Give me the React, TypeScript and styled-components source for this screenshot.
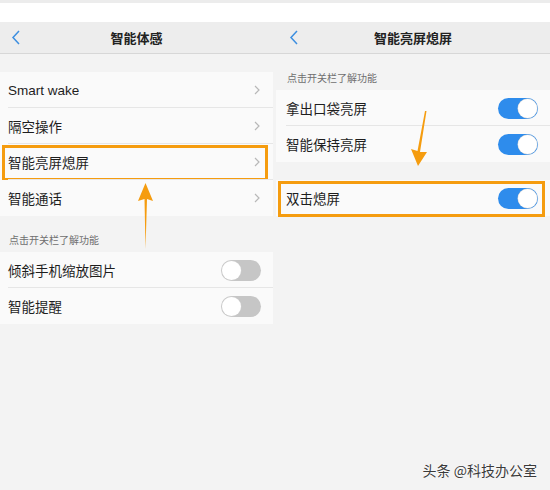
import React from "react";
import styled, { createGlobalStyle } from "styled-components";

const Global = createGlobalStyle`
  html, body { margin: 0; padding: 0; background: #f3f3f3; }
  body { font-family: "Liberation Sans", "Noto Sans CJK SC", sans-serif; }
`;

const Page = styled.div`
  position: relative;
  width: 550px;
  height: 490px;
  overflow: hidden;
  display: flex;
  background: #f3f3f3;
`;

const Phone = styled.div<{ $w: number; $pad: number; $trim: number }>`
  width: ${(p) => p.$w}px;
  flex: none;
  display: flex;
  flex-direction: column;
  background: #f3f3f3;
  --pad: ${(p) => p.$pad}px;
  --trim: ${(p) => p.$trim}px;
`;

const StatusBar = styled.div`
  height: 19px;
  border-top: 3px solid #ececec;
  background: #ffffff;
`;

const Header = styled.div`
  position: relative;
  height: 31px;
  background: #ededed;
  border-bottom: 1px solid #d7d7d7;
  display: flex;
  align-items: center;
  justify-content: center;
  padding-right: var(--trim);
  font-family: "Noto Sans CJK SC", sans-serif;
  font-size: 13px;
  font-weight: 600;
  color: #222;
`;

const Back = styled.svg`
  position: absolute;
  left: calc(var(--pad) + 3px);
  top: 8px;
`;

const Spacer = styled.div<{ $h: number }>`
  height: ${(p) => p.$h}px;
`;

const SectionLabel = styled.div`
  height: 36px;
  box-sizing: border-box;
  display: flex;
  align-items: flex-end;
  padding: 0 0 5px calc(var(--pad) + 1px);
  font-family: "Noto Sans CJK SC", sans-serif;
  font-size: 10px;
  color: #6f6f6f;
`;

const Group = styled.div`
  background: #fafafa;
  margin-right: var(--trim);
`;

const Row = styled.div<{ $hl?: boolean; $last?: boolean }>`
  position: relative;
  height: 36px;
  box-sizing: border-box;
  display: flex;
  align-items: center;
  justify-content: space-between;
  padding: 0 12px 0 var(--pad);
  background: #fafafa;
  font-family: "Liberation Sans", "Noto Sans CJK SC", sans-serif;
  font-size: 13.5px;
  color: #1e1e1e;
  &::after {
    content: "";
    display: ${(p) => (p.$last ? "none" : "block")};
    position: absolute;
    left: var(--pad);
    right: 0;
    bottom: 0;
    height: 1px;
    background: #e6e6e6;
  }
  &::before {
    content: "";
    display: ${(p) => (p.$hl ? "block" : "none")};
    position: absolute;
    left: 2px;
    right: 5px;
    top: 1px;
    bottom: -1px;
    border: 3px solid #f59c0f;
  }
`;

const Toggle = styled.div<{ $on: boolean }>`
  position: relative;
  width: 40px;
  height: 21px;
  border-radius: 11px;
  background: ${(p) => (p.$on ? "#2e8cec" : "#c6c6c6")};
  &::after {
    content: "";
    position: absolute;
    top: 1px;
    ${(p) => (p.$on ? "right: 1px;" : "left: 1px;")}
    width: 19px;
    height: 19px;
    border-radius: 50%;
    background: #ffffff;
    box-shadow: 0 0 0 0.5px #d0d0d0;
  }
`;

const Overlay = styled.svg`
  position: absolute;
  left: 0;
  top: 0;
  pointer-events: none;
`;

const Watermark = styled.div`
  position: absolute;
  right: 13px;
  bottom: 10px;
  font-family: "Noto Sans CJK SC", sans-serif;
  font-size: 14px;
  color: #3a3a3a;
  text-shadow: 0 0 2px #fff, 0 0 1px #fff;
`;

const Chevron = () => (
  <svg width="8" height="10" viewBox="0 0 8 10">
    <polyline points="2,1 6,5 2,9" fill="none" stroke="#b8b8b8" strokeWidth="1.2" />
  </svg>
);

const BackIcon = () => (
  <Back width="10" height="15" viewBox="0 0 10 15">
    <polyline points="8,1 2,7.5 8,14" fill="none" stroke="#3d8fe0" strokeWidth="1.5" />
  </Back>
);

export default function App() {
  return (
    <>
      <Global />
      <Page>
        <Phone $w={276} $pad={8} $trim={3}>
          <StatusBar />
          <Header>
            <BackIcon />
            智能体感
          </Header>
          <Spacer $h={18} />
          <Group>
            <Row>
              Smart wake
              <Chevron />
            </Row>
            <Row>
              隔空操作
              <Chevron />
            </Row>
            <Row $hl>
              智能亮屏熄屏
              <Chevron />
            </Row>
            <Row $last>
              智能通话
              <Chevron />
            </Row>
          </Group>
          <SectionLabel>点击开关栏了解功能</SectionLabel>
          <Group>
            <Row>
              倾斜手机缩放图片
              <Toggle $on={false} />
            </Row>
            <Row $last>
              智能提醒
              <Toggle $on={false} />
            </Row>
          </Group>
        </Phone>
        <Phone $w={274} $pad={10} $trim={0}>
          <StatusBar />
          <Header>
            <BackIcon />
            智能亮屏熄屏
          </Header>
          <SectionLabel>点击开关栏了解功能</SectionLabel>
          <Group>
            <Row>
              拿出口袋亮屏
              <Toggle $on />
            </Row>
            <Row $last>
              智能保持亮屏
              <Toggle $on />
            </Row>
          </Group>
          <Spacer $h={18} />
          <Group>
            <Row $hl $last>
              双击熄屏
              <Toggle $on />
            </Row>
          </Group>
        </Phone>
        <Overlay width="550" height="490" viewBox="0 0 550 490">
          <polygon points="145.5,183 138,201 144.5,199 145.5,249 147,199 153,201" fill="#f59c0f" />
          <polygon points="418,166 411,149 417.5,151 425,111 426.5,111 420,152 427,152" fill="#f59c0f" />
        </Overlay>
        <Watermark>头条 @科技办公室</Watermark>
      </Page>
    </>
  );
}
